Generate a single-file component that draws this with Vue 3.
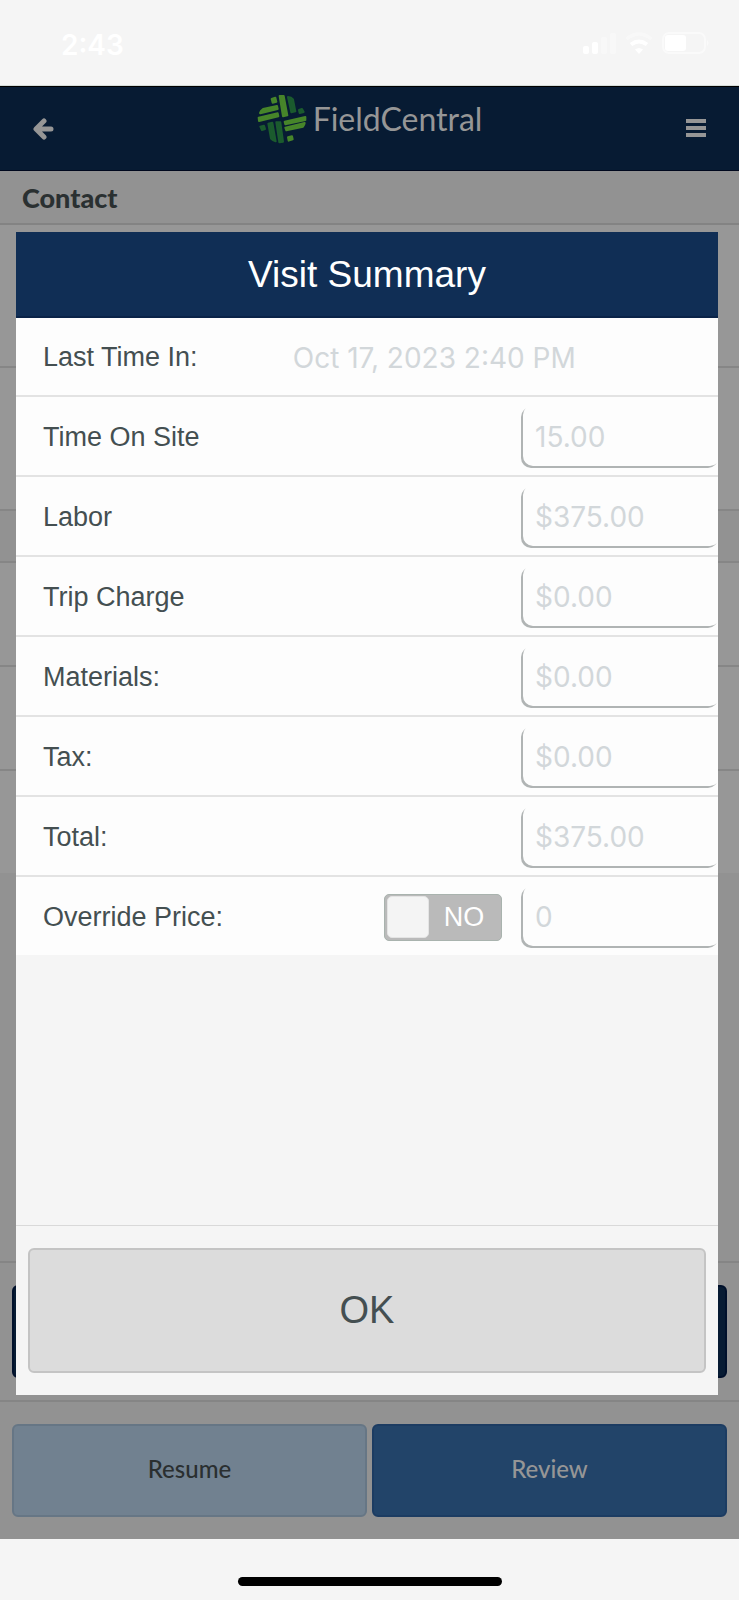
<script setup>
import { reactive, ref } from 'vue'

const visit = reactive([
  { id: 'site', label: 'Time On Site', value: '15.00' },
  { id: 'labor', label: 'Labor', value: '$375.00' },
  { id: 'trip', label: 'Trip Charge', value: '$0.00' },
  { id: 'materials', label: 'Materials:', value: '$0.00' },
  { id: 'tax', label: 'Tax:', value: '$0.00' },
  { id: 'total', label: 'Total:', value: '$375.00' }
])
const lastTimeIn = ref('Oct 17, 2023 2:40 PM')
const override = ref(false)
const overridePrice = ref('0')
</script>

<template>
  <div class="phone">
    <div class="status">
      <span class="clock">2:43</span>
      <svg class="status-icons" viewBox="0 0 130 26" width="130" height="26" aria-hidden="true">
        <g fill="#fff">
          <rect x="0" y="14" width="6" height="8" rx="2" />
          <rect x="9" y="10" width="6" height="12" rx="2" />
          <rect x="18" y="5" width="6" height="17" rx="2" opacity=".35" />
          <rect x="27" y="1" width="6" height="21" rx="2" opacity=".35" />
          <path d="M52 17.500Q56 14.500 60 17.500L56 22Z" />
        </g>
        <path d="M48 12.500Q56 6.500 64 12.500" fill="none" stroke="#fff" stroke-width="4" />
        <path d="M43.500 7Q56 -3 68.500 7" fill="none" stroke="#fff" stroke-width="3.500" opacity=".35" />
        <rect x="80" y="1" width="42" height="20" rx="6" fill="none" stroke="#fff" stroke-width="2" opacity=".5" />
        <rect x="82" y="3" width="21" height="16" rx="3" fill="#fff" />
        <path d="M124 8Q127 11 124 14Z" fill="#fff" opacity=".5" />
      </svg>
    </div>

    <div class="screen">
      <header class="topbar">
        <button class="icon-btn" type="button" aria-label="Back">
          <svg viewBox="0 0 22 22" width="22" height="22">
            <path d="M12 3L4 11L12 19M5 11H19" fill="none" stroke="#969696" stroke-width="5" stroke-linecap="round" stroke-linejoin="round" />
          </svg>
        </button>
        <div class="brand">
          <svg viewBox="55 25 150 150" width="50" height="50" aria-hidden="true">
            <g fill="#47852a" stroke="#47852a" stroke-width="6" stroke-linejoin="round">
              <path d="M99 40L110 36L113 48L102 51Z" />
              <path d="M123 31L135 31L146 89L133 92Z" />
              <path d="M64 82Q66 74 73 70L115 61L117 70L65 83Z" />
              <path d="M60 96L117 83L119 92L61 106Z" />
              <path d="M138 108L200 94L200 103L140 116Z" />
              <path d="M140 126L198 112Q197 118 193 123L143 134Z" />
              <path d="M148 155L160 152L162 161L150 165Z" />
            </g>
            <g fill="#1b5b2e" stroke="#1b5b2e" stroke-width="6" stroke-linejoin="round">
              <path d="M148 34Q158 35 163 41L170 77L158 80Z" />
              <path d="M181 73L190 70L195 79L183 82Z" />
              <path d="M65 123L76 120L79 130L70 133Z" />
              <path d="M89 114L101 111L111 167Q102 164 97 159Z" />
              <path d="M113 110L125 110L133 168L122 170Z" />
            </g>
          </svg>
          <span class="brand-name">FieldCentral</span>
        </div>
        <button class="icon-btn" type="button" aria-label="Menu">
          <svg viewBox="0 0 22 22" width="22" height="22">
            <path d="M1 3H21M1 10H21M1 17H21" stroke="#969696" stroke-width="4" />
          </svg>
        </button>
      </header>

      <main class="page">
        <h2 class="contact">Contact</h2>
        <div class="block tall"></div>
        <div class="block tall"></div>
        <div class="block heading"></div>
        <div class="block"></div>
        <div class="block"></div>
        <div class="block last"></div>
        <div class="rest"></div>
        <div class="actions"><span class="submit"></span></div>
        <div class="actions">
          <button class="action resume" type="button">Resume</button>
          <button class="action review" type="button">Review</button>
        </div>
      </main>

      <section class="dialog" role="dialog" aria-labelledby="dialog-title">
        <h1 id="dialog-title" class="title">Visit Summary</h1>
        <div class="row">
          <label for="last">Last Time In:</label>
          <input id="last" class="plain" type="text" readonly :value="lastTimeIn" />
        </div>
        <div v-for="item in visit" :key="item.id" class="row">
          <label :for="item.id">{{ item.label }}</label>
          <input :id="item.id" class="field" type="text" readonly :value="item.value" />
        </div>
        <div class="row">
          <label for="override">Override Price:</label>
          <label class="toggle">
            <input id="override" v-model="override" type="checkbox" />
            <span>{{ override ? 'YES' : 'NO' }}</span>
          </label>
          <input v-model="overridePrice" class="field" type="text" aria-label="Override price amount" :readonly="!override" />
        </div>
        <footer class="footer">
          <button class="ok" type="button">OK</button>
        </footer>
      </section>
    </div>

    <div class="home"><span></span></div>
  </div>
</template>

<style>
body {
  margin: 0;
}
</style>

<style scoped>
* {
  box-sizing: border-box;
}
.phone {
  min-height: 100vh;
  display: flex;
  flex-direction: column;
  background: #f5f5f5;
  font-family: "Liberation Sans", Arial, sans-serif;
}
button,
input {
  font: inherit;
}
.status {
  height: 86px;
  padding: 4px 26px 0 61px;
  display: flex;
  align-items: center;
  justify-content: space-between;
  border-bottom: 1px solid #d5dcd9;
}
.clock {
  font: 600 28px/32px Inter, sans-serif;
  color: #fff;
}
.status-icons {
  display: block;
}
.screen {
  position: relative;
  flex: 1;
  display: flex;
  flex-direction: column;
}
.topbar {
  height: 85px;
  padding: 0 32px;
  display: flex;
  align-items: center;
  justify-content: space-between;
  background: #071b33;
  border-top: 1px solid #000;
  border-bottom: 1px solid #00081d;
}
.icon-btn {
  padding: 0;
  border: 0;
  background: none;
  display: flex;
}
.brand {
  display: flex;
  align-items: center;
  gap: 6px;
  padding-bottom: 20px;
}
.brand-name {
  font: 400 32px/40px Lato, sans-serif;
  color: #969696;
}
.page {
  flex: 1;
  display: flex;
  flex-direction: column;
  background: #929292;
}
.contact {
  margin: 0;
  height: 54px;
  padding: 0 22px;
  font: 900 27px/54px Lato, sans-serif;
  color: #2a3031;
  border-bottom: 2px solid #838383;
}
.block {
  height: 104px;
  background: #979797;
  border-bottom: 2px solid #868686;
}
.tall {
  height: 143px;
}
.heading {
  height: 52px;
  background: #929292;
}
.last {
  height: 102px;
  border-bottom: 0;
}
.rest {
  flex: 1;
}
.actions {
  height: 139px;
  padding: 22px 12px;
  display: flex;
  gap: 5px;
  border-top: 2px solid #858585;
}
.submit {
  flex: 1;
  height: 93px;
  border-radius: 6px;
  background: #071b33;
  border: 2px solid #00102b;
}
.action {
  flex: 1;
  height: 93px;
  padding: 0 0 3px;
  border-radius: 6px;
  font: 500 24px/32px Lato, sans-serif;
}
.resume {
  color: #2a2f30;
  background: #718190;
  border: 2px solid #667685;
}
.review {
  color: #969696;
  background: #224469;
  border: 2px solid #1c3c62;
}
.dialog {
  position: absolute;
  top: 146px;
  left: 16px;
  right: 21px;
  bottom: 144px;
  display: flex;
  flex-direction: column;
  background: #f5f5f5;
}
.title {
  margin: 0;
  height: 86px;
  font-size: 37px;
  font-weight: 400;
  line-height: 86px;
  text-align: center;
  color: #fff;
  background: #102e55;
  border-bottom: 2px solid #0a2348;
}
.row {
  height: 80px;
  padding: 2px 0 0 27px;
  display: flex;
  align-items: center;
  background: #fdfdfd;
  border-bottom: 2px solid #e3e3e3;
  font-size: 27px;
  color: #444f51;
}
.row:first-of-type {
  height: 79px;
}
.row > label:first-child {
  flex: 1;
}
.row:nth-last-child(2) {
  height: 78px;
  border-bottom: 0;
}
.plain,
.field {
  min-width: 0;
  margin: 0;
  outline: 0;
  background: transparent;
  font: 400 28px/32px Inter, sans-serif;
  color: #d2d7da;
}
.plain {
  width: 63%;
  padding: 0;
  border: 0;
}
.field {
  width: 197px;
  height: 61px;
  padding: 0 14px;
  border: 0;
  border-radius: 10px;
  box-shadow: inset 2px -2px 0 #b0b4b4;
}
.toggle {
  width: 118px;
  height: 47px;
  margin-right: 19px;
  padding: 2px;
  display: flex;
  align-items: center;
  border-radius: 5px;
  background: #bababa;
  border: 1px solid #a9b3ae;
  color: #fff;
}
.toggle input {
  appearance: none;
  width: 42px;
  height: 42px;
  margin: 0;
  border-radius: 5px;
  background: #f4f4f4;
  border: 1px solid #e4e4e4;
}
.toggle span {
  flex: 1;
  text-align: center;
}
.footer {
  margin-top: auto;
  padding: 22px 12px;
  border-top: 1px solid #d9d9d9;
}
.ok {
  width: 100%;
  height: 125px;
  border: 2px solid #c4c4c4;
  border-radius: 6px;
  background: #dcdcdc;
  font-size: 38px;
  color: #444f51;
}
.home {
  height: 61px;
  padding-top: 38px;
  display: flex;
  justify-content: center;
}
.home span {
  width: 264px;
  height: 9px;
  border-radius: 5px;
  background: #000;
}
</style>
